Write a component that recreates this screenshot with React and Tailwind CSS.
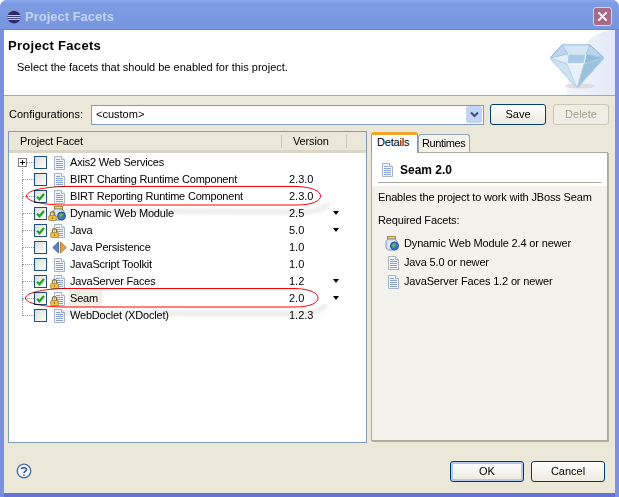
import React from "react";

function Page({ className = "" }) {
  return (
    <svg width="11" height="14" viewBox="0 0 11 14" className={className}>
      <path d="M.5.500h7l3 3v10H.5z" fill="#f1f4fb" stroke="#a8b3c6" />
      <path d="M7.500.500v3h3" fill="#fff" stroke="#a8b3c6" />
      <path d="M2 3.500h4M2 5.500h7M2 7.500h7M2 9.500h7M2 11.500h7" stroke="#8aa3cc" />
    </svg>
  );
}

function Lock() {
  return (
    <svg width="9" height="10" viewBox="0 0 11 12" className="absolute left-[-4px] bottom-0">
      <path d="M3 6V3.200a2.500 2.500 0 0 1 5 0V6" fill="none" stroke="#8a6a2a" strokeWidth="1.500" />
      <rect x=".8" y="5.500" width="9.400" height="6" rx="1" fill="#f1c24a" stroke="#a47a1e" strokeWidth=".9" />
      <path d="M5.500 7.500v2" stroke="#7a5a10" strokeWidth="1.200" />
    </svg>
  );
}

function PageLock() {
  return (
    <span className="relative block w-[11px] h-[14px]">
      <Page />
      <Lock />
    </span>
  );
}

function Jar({ lock }) {
  return (
    <span className="relative block w-[15px] h-[15px]">
      <svg width="15" height="15" viewBox="0 0 15 15">
        <rect x="2.500" y=".5" width="8" height="2.500" fill="#f2d98a" stroke="#a58a3c" />
        <path d="M3 3h7l2 2.500v7L10.500 14h-7L1 12V5.500z" fill="#dbe6f4" stroke="#7d93b5" />
        <circle cx="9.500" cy="10" r="4" fill="#3d78c4" stroke="#24528f" />
        <path d="M7 9c1-1.500 2.500-2 3.500-1.200s0 2-1 2.500-.5 2-1.500 1.800z" fill="#69b45a" />
      </svg>
      {lock && <Lock />}
    </span>
  );
}

function Arrows() {
  return (
    <svg width="15" height="13" viewBox="0 0 15 13">
      <path d="M6.500 1v11L.8 6.500z" fill="#5d83c2" stroke="#2f5590" strokeWidth=".8" />
      <path d="M8.500 1v11l5.700-5.500z" fill="#dba24a" stroke="#99681c" strokeWidth=".8" />
    </svg>
  );
}

function Check({ on }) {
  return (
    <span className="w-[13px] h-[13px] shrink-0 border border-[#1c5180] bg-gradient-to-br from-[#dcdcd7] to-white flex items-center justify-center">
      {on && (
        <svg width="9" height="8" viewBox="0 0 9 8">
          <path d="M1 3.800l2.500 2.500L8 1" fill="none" stroke="#21a121" strokeWidth="2.200" />
        </svg>
      )}
    </span>
  );
}

const rows = [
  { t: "Axis2 Web Services", v: "", plus: true, icon: "page" },
  { t: "BIRT Charting Runtime Component", v: "2.3.0", icon: "page" },
  { t: "BIRT Reporting Runtime Component", v: "2.3.0", on: true, icon: "page" },
  { t: "Dynamic Web Module", v: "2.5", on: true, icon: "jar", arrow: true },
  { t: "Java", v: "5.0", on: true, icon: "lock", arrow: true },
  { t: "Java Persistence", v: "1.0", icon: "arrows" },
  { t: "JavaScript Toolkit", v: "1.0", icon: "page" },
  { t: "JavaServer Faces", v: "1.2", on: true, icon: "lock", arrow: true },
  { t: "Seam", v: "2.0", on: true, icon: "lock", arrow: true, sel: true },
  { t: "WebDoclet (XDoclet)", v: "1.2.3", icon: "page", last: true },
];

function Row({ r, first }) {
  return (
    <div className="flex h-[17px] items-center text-[#000]">
      <div className="w-[274px] flex items-center h-full shrink-0">
        <div className="relative w-[12px] h-full ml-[13px] shrink-0 flex flex-col">
          <div className={"h-[9px] border-b border-dotted border-[#9a9a9a] " + (first ? "" : "border-l")} />
          <div className={"flex-1 " + (r.last ? "" : "border-l border-dotted border-[#9a9a9a]")} />
          {r.plus && (
            <span className="absolute left-[-4px] top-[4px] w-[9px] h-[9px] border border-[#808080] bg-white flex items-center justify-center">
              <svg width="7" height="7" viewBox="0 0 7 7"><path d="M1 3.500h5M3.500 1v5" stroke="#000" /></svg>
            </span>
          )}
        </div>
        <Check on={r.on} />
        <div className="w-[22px] flex items-center justify-center pl-[2px] shrink-0">
          {r.icon === "page" && <Page />}
          {r.icon === "lock" && <PageLock />}
          {r.icon === "jar" && <Jar lock />}
          {r.icon === "arrows" && <Arrows />}
        </div>
        <span className={"px-[1px] leading-[17px] tracking-[-0.2px] " + (r.sel ? "bg-[#f0efe6] pr-[4px]" : "")}>{r.t}</span>
      </div>
      <div className="w-[50px] pl-[6px] shrink-0">{r.v}</div>
      {r.arrow && <span className="w-0 h-0 border-x-[3px] border-x-transparent border-t-[4px] border-t-black -mt-[2px]" />}
    </div>
  );
}

function Btn({ children, disabled, w = "w-[56px]", h = "h-[21px]", primary }) {
  return (
    <div
      className={
        w + " " + h +
        " shrink-0 rounded-[3px] border flex items-center justify-center " +
        (disabled
          ? "border-[#c9c7ba] bg-[#f0eee4] text-[#a1a192]"
          : "border-[#003c74] bg-gradient-to-b from-white to-[#ece9de] text-black " +
            (primary ? "shadow-[inset_0_0_0_2px_#b4c8ee]" : ""))
      }
    >
      {children}
    </div>
  );
}

function Diamond() {
  return (
    <svg width="56" height="46" viewBox="0 0 56 46">
      <ellipse cx="31" cy="42" rx="15" ry="2.500" fill="#dcdce2" />
      <path d="M1 14 13 1h28l14 13-27 30z" fill="#bcd6ee" stroke="#7fadd4" />
      <path d="M13 1 19 10h18l4-9z" fill="#d4e6f5" stroke="#a6c7e2" />
      <path d="M1 14 19 10l-1 10z" fill="#e2eff9" stroke="#a6c7e2" />
      <path d="M37 10 55 14 35 20z" fill="#93bada" stroke="#a6c7e2" />
      <path d="M19 10h18l-2 10H18z" fill="#a9cbe6" stroke="#eef6fc" />
      <path d="M18 20h17l-7 24z" fill="#e6f1fa" stroke="#fff" />
      <path d="M35 20 55 14 28 44z" fill="#9cc1de" stroke="#b0cfe6" />
      <path d="M1 14 18 20 28 44z" fill="#cfe2f3" stroke="#b8d3ea" />
    </svg>
  );
}

function Help() {
  return (
    <svg width="16" height="16" viewBox="0 0 16 16">
      <circle cx="8" cy="8" r="6.800" fill="#f6f8fc" stroke="#4a6da7" strokeWidth="1.300" />
      <path d="M5.500 6.200C5.500 4.500 10.500 4 10.500 6.500 10.500 8.200 8 8 8 10" fill="none" stroke="#2f4f88" strokeWidth="1.500" />
      <path d="M8 11.200v1.600" stroke="#2f4f88" strokeWidth="1.500" />
    </svg>
  );
}

function Eclipse() {
  return (
    <svg width="14" height="14" viewBox="0 0 15 15">
      <circle cx="7.500" cy="7.500" r="7" fill="#2b2a6e" />
      <path d="M.6 6h13.800M.5 8h14M1.200 10h12.600" stroke="#e6e8f5" strokeWidth="1" />
      <path d="M3 2.500a6 6 0 0 1 9 0" stroke="#8d8cc4" fill="none" />
    </svg>
  );
}

export default function App() {
  return (
    <div
      className="relative w-[619px] h-[497px] flex flex-col bg-[#7b90e0] rounded-t-[7px] overflow-hidden text-[11px] leading-[13px] text-black"
      style={{ fontFamily: '"Liberation Sans", Arial, sans-serif' }}
    >
      <div className="h-[30px] shrink-0 flex items-center pt-[2px] pl-[7px] pr-[7px] border-t-2 border-[#8aa6ea] border-b-[1px] border-b-[#6b80d6] bg-gradient-to-b from-[#7d9ce4] to-[#7796df]">
        <Eclipse />
        <span className="ml-[4px] font-bold text-[13px] text-[#c6d4f4]">Project Facets</span>
        <div className="ml-auto w-[19px] h-[19px] rounded-[3px] bg-[#a66b87] border border-[#d6d6ea] flex items-center justify-center">
          <svg width="11" height="11" viewBox="0 0 12 12"><path d="M1.500 1.500l9 9M10.500 1.500l-9 9" stroke="#fff" strokeWidth="2.200" /></svg>
        </div>
      </div>

      <div className="flex-1 flex flex-col min-h-0 mx-[4px] border-b-4 border-b-[#6573d4] bg-[#ebe8d9]">
        <div className="h-[66px] shrink-0 bg-white border-b border-[#aca899] flex justify-between overflow-hidden">
          <div className="pl-[4px] pt-[8px]">
            <div className="font-bold text-[13px] tracking-[0.3px] leading-[15px]">Project Facets</div>
            <div className="pl-[9px] pt-[8px]">Select the facets that should be enabled for this project.</div>
          </div>
          <div className="relative w-[66px] pt-[14px] pr-[10px] flex justify-end">
            <div className="absolute right-0 top-0 bottom-0 w-[48px] rounded-tl-[48px_66px] bg-gradient-to-r from-[#f3f5fb] to-[#e3e9f6]" />
            <div className="relative"><Diamond /></div>
          </div>
        </div>

        <div className="flex items-center mt-[8px] pl-[5px] pr-[6px] h-[21px] shrink-0">
          <span className="w-[82px] shrink-0">Configurations:</span>
          <div className="w-[393px] h-[20px] shrink-0 border border-[#7f9db9] bg-white flex items-center justify-between pl-[4px] pr-[1px]">
            <span>&lt;custom&gt;</span>
            <span className="w-[16px] h-[17px] rounded-[2px] bg-[#c3d3f5] flex items-center justify-center">
              <svg width="9" height="7" viewBox="0 0 9 7"><path d="M1 1.500l3.500 3.500L8 1.500" fill="none" stroke="#3e5178" strokeWidth="2" /></svg>
            </span>
          </div>
          <div className="ml-[6px]"><Btn>Save</Btn></div>
          <div className="ml-[7px]"><Btn disabled>Delete</Btn></div>
        </div>

        <div className="flex-1 min-h-0 flex mt-[6px] pl-[4px] pr-[7px]">
          <div className="w-[359px] h-[312px] shrink-0 border border-[#7f9db9] bg-white flex flex-col">
            <div className="h-[21px] shrink-0 flex items-center bg-[#ebe8d9] border-b-[3px] border-b-[#d9d6c5]">
              <span className="w-[273px] pl-[11px] border-r border-[#c9c7b8] tracking-[-0.15px]">Project Facet</span>
              <span className="w-[65px] pl-[11px] border-r border-[#c9c7b8] tracking-[-0.15px]">Version</span>
            </div>
            <div className="pt-[1px]">
              {rows.map((r, i) => <Row key={r.t} r={r} first={i === 0} />)}
            </div>
          </div>

          <div className="ml-[4px] w-[238px] flex flex-col">
            <div className="h-[21px] shrink-0 flex items-end">
              <div className="w-[47px] h-[21px] rounded-t-[3px] border-t-[3px] border-t-[#f1a52a] border-x border-x-[#919b9c] bg-white pl-[5px] pt-[1px] leading-[13px] tracking-[-0.2px] relative z-10 -mb-[1px]">Details</div>
              <div className="w-[52px] h-[18px] rounded-t-[3px] border border-b-0 border-[#91a7b4] bg-[#f4f3ec] pl-[3px] pt-[2px] tracking-[-0.4px]">Runtimes</div>
            </div>
            <div className="h-[289px] shrink-0 border border-[#a9a99c] shadow-[1px_1px_0_#b5b3a6] bg-[#f4f2ec] flex flex-col">
              <div className="h-[33px] shrink-0 bg-white flex flex-col">
                <div className="flex items-center pl-[10px] pt-[10px]">
                  <Page />
                  <span className="ml-[7px] font-bold text-[12px]">Seam 2.0</span>
                </div>
                <div className="mt-[5px] mx-[6px] h-px bg-[#a9a79a]" />
              </div>
              <div className="pl-[6px] pt-[5px] leading-[13px] tracking-[-0.15px]">Enables the project to work with JBoss Seam</div>
              <div className="pl-[6px] pt-[10px] tracking-[-0.15px]">Required Facets:</div>
              <div className="pl-[13px] pt-[9px] flex flex-col gap-[4px] tracking-[-0.15px]">
                <div className="flex items-center h-[15px]"><Jar /><span className="ml-[4px]">Dynamic Web Module 2.4 or newer</span></div>
                <div className="flex items-center h-[15px] pl-[3px]"><Page /><span className="ml-[5px]">Java 5.0 or newer</span></div>
                <div className="flex items-center h-[15px] pl-[3px]"><Page /><span className="ml-[5px]">JavaServer Faces 1.2 or newer</span></div>
              </div>
            </div>
          </div>
        </div>

        <div className="h-[50px] shrink-0 flex items-center pl-[12px] pr-[10px] pt-[6px]">
          <Help />
          <div className="ml-auto flex gap-[7px]">
            <Btn w="w-[74px]" primary>OK</Btn>
            <Btn w="w-[74px]">Cancel</Btn>
          </div>
        </div>
      </div>

      <svg width="619" height="497" viewBox="0 0 619 497" className="absolute inset-0 pointer-events-none mix-blend-multiply">
        <g className="blur-[1px]">
          <path d="M60 210.500C62 210.500 300 212 306 212S327 209 327 203" fill="none" stroke="#efefef" strokeWidth="6" />
          <path d="M60 313C62 313 300 314 303 314S325 310 325 304" fill="none" stroke="#efefef" strokeWidth="6" />
        </g>
        <path d="M297 186.500C312 187 320.500 191 320.500 196S312 205 297 205H65C42 205 26.500 201 26.500 196S42 187 65 186.500Z" fill="none" stroke="#f00" />
        <path d="M295 288.500C310 289 318 293 318 298S310 307 295 307H65C42 307 25.500 303 25.500 298S42 289 65 288.500Z" fill="none" stroke="#f00" />
      </svg>
    </div>
  );
}
